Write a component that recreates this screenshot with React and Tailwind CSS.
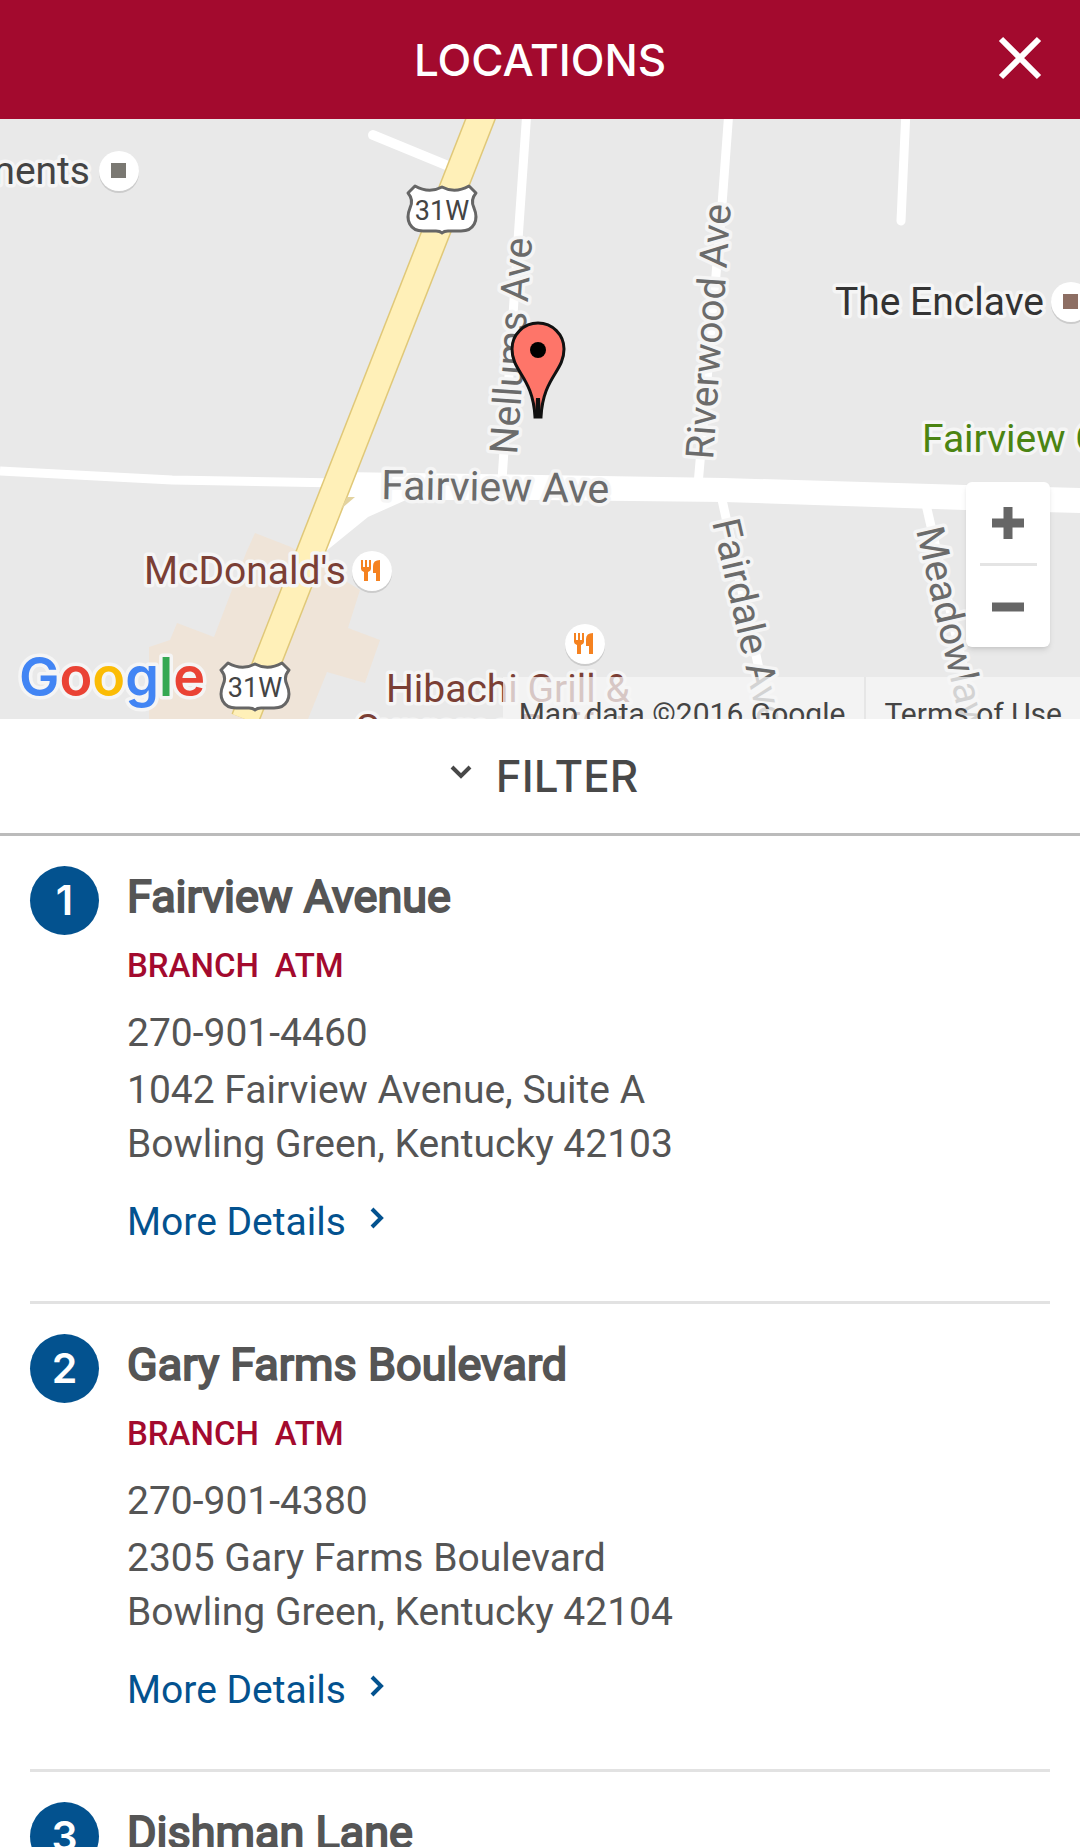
import React from "react";

const locations = [
  {
    name: "Fairview Avenue",
    tags: ["BRANCH", "ATM"],
    phone: "270-901-4460",
    street: "1042 Fairview Avenue, Suite A",
    city: "Bowling Green, Kentucky 42103",
  },
  {
    name: "Gary Farms Boulevard",
    tags: ["BRANCH", "ATM"],
    phone: "270-901-4380",
    street: "2305 Gary Farms Boulevard",
    city: "Bowling Green, Kentucky 42104",
  },
  { name: "Dishman Lane" },
];

function Shield({ x, y }) {
  return (
    <g transform={`translate(${x} ${y})`}>
      <path
        d="M-27 -24 Q-13 -16 0 -23 Q13 -16 27 -24 L34 -17 Q28 -10 32 -2 C37 10 32 21 19 21 L6 21 Q2 21 0 23 Q-2 21 -6 21 L-19 21 C-32 21 -37 10 -32 -2 Q-28 -10 -34 -17 Z"
        fill="#fff"
        stroke="#666"
        strokeWidth="3"
        strokeLinejoin="round"
      />
      <text y="10" textAnchor="middle" fontSize="27" fill="#444">
        31W
      </text>
    </g>
  );
}

function Poi({ x, y, color }) {
  return (
    <g transform={`translate(${x} ${y})`}>
      <circle cy="2" r="20" fill="#ccc" />
      <circle r="20" fill="#fff" />
      {color ? (
        <rect x="-8" y="-8" width="15" height="15" fill={color} />
      ) : (
        <g fill="#f58220">
          <path d="M-11 -11 h2 v7 h2 v-7 h2 v7 h2 v-7 h2 v9 q0 2 -3 3 v9 h-4 v-9 q-3 -1 -3 -3 z" />
          <path d="M8 -11 V10 H4 V2 H1 V-5 Q1 -11 8 -11 Z" />
        </g>
      )}
    </g>
  );
}

const halo = {
  stroke: "#f5f5f5",
  strokeWidth: 7,
  strokeLinejoin: "round",
  paintOrder: "stroke",
};

function MapDrawing() {
  return (
    <svg
      viewBox="0 119 1080 600"
      preserveAspectRatio="xMidYMid slice"
      className="block h-full w-full"
      role="img"
      aria-label="Map around Fairview Avenue"
    >
      <path
        d="M255 533 L291 547 L360 590 L348 628 L380 640 L365 683 L327 672 L308 719 H149 V647 L170 640 L177 623 L214 637 L246 553 Z"
        fill="#efe4d8"
      />
      <g fill="none" stroke="#fff" strokeWidth="9">
        <path d="M373 135 L446 165" strokeWidth="10" strokeLinecap="round" />
        <path d="M527 110 L518 240 L502 480" />
        <path d="M729 110 L722 205 L698 485" />
        <path d="M906 110 L901 221" strokeLinecap="round" />
        <path d="M721 495 L770 719" />
        <path d="M925 500 L975 719" />
        <path d="M0 471 L172 480 L340 483" />
      </g>
      <path
        d="M340 472 L540 475 L724 478 L965 485 L1080 488 V513 L965 510 L724 502 L540 500 L406 500 L368 517 L320 556 Z"
        fill="#fff"
      />
      <path d="M484 110 L245 719" stroke="#e0c878" strokeWidth="29" />
      <path d="M484 110 L245 719" stroke="#fff0b8" strokeWidth="26" />
      <path d="M347 497 H355 L341 509 Z" fill="#e3d3a0" />

      <Shield x={442} y={210} />
      <Shield x={255} y={687} />

      <g fontSize="39" {...halo}>
        <text x="90" y="184" textAnchor="end" fill="#444">Apartments</text>
        <text x="835" y="315" fill="#333">The Enclave</text>
        <text x="922" y="452" fill="#4b8412">Fairview Gardens</text>
        <text x="144" y="584" fill="#7b3f35">McDonald's</text>
        <text x="386" y="702" fill="#7b3f35">Hibachi Grill &amp;</text>
        <text x="356" y="742" fill="#7b3f35">Supreme Buffet</text>
        <g fill="#6b6b6b">
          <text transform="translate(381 499) rotate(1)" fontSize="41">Fairview Ave</text>
          <text transform="translate(517 455) rotate(-86)">Nellums Ave</text>
          <text transform="translate(713 460) rotate(-86)">Riverwood Ave</text>
          <text transform="translate(712 522) rotate(77)">Fairdale Ave</text>
          <text transform="translate(916 530) rotate(77)">Meadowlawn</text>
        </g>
      </g>

      <Poi x={119} y={171} color="#7a7872" />
      <Poi x={1071} y={302} color="#8d6e63" />
      <Poi x={372} y={571} />
      <Poi x={585} y={644} />

      <g transform="translate(538 322)">
        <path
          d="M-3 95 C-5 55 -26 50 -26 27 A26 26 0 0 1 26 27 C26 50 5 55 3 95 Z"
          fill="#fe7569"
          stroke="#111"
          strokeWidth="3"
        />
        <path d="M-3 95 L-2 76 H2 L3 95 Z" fill="#111" />
        <circle cy="28" r="8" fill="#000" />
      </g>

      <text
        x="19"
        y="696"
        fontSize="54"
        fontWeight="600"
        className="font-['Inter',sans-serif]"
        {...halo}
      >
        <tspan fill="#4285f4">G</tspan>
        <tspan fill="#ea4335">o</tspan>
        <tspan fill="#fbbc05">o</tspan>
        <tspan fill="#4285f4">g</tspan>
        <tspan fill="#34a853">l</tspan>
        <tspan fill="#ea4335">e</tspan>
      </text>
    </svg>
  );
}

function LocationItem({ number, place }) {
  return (
    <li className="flex items-start gap-7 border-b-[3px] border-[#e2e2e2] pt-[30px]">
      <span className="flex size-[69px] shrink-0 items-center justify-center rounded-full bg-[#03528f] font-['Inter',sans-serif] text-[41px] leading-none font-semibold text-white">
        {number}
      </span>
      <div className="min-w-0 flex-1 pb-[52px] text-[39px] leading-[54px]">
        <h2 className="text-[45px] leading-[62px] [-webkit-text-stroke:2px]">{place.name}</h2>
        {place.tags && (
          <>
            <p className="mt-[18px] flex gap-4 text-[33px] leading-[40px] font-medium text-[#a30a2e]">
              {place.tags.map((tag) => (
                <span key={tag}>{tag}</span>
              ))}
            </p>
            <p className="mt-5">{place.phone}</p>
            <address className="mt-[3px] not-italic">
              {place.street}
              <br />
              {place.city}
            </address>
            <a href="#details" className="mt-6 inline-flex items-center gap-6 text-[#03528f]">
              More Details
              <svg width="14" height="22" viewBox="0 0 14 22" className="mb-2" aria-hidden="true">
                <path d="M2 2 L11 11 L2 20" fill="none" stroke="currentColor" strokeWidth="4" />
              </svg>
            </a>
          </>
        )}
      </div>
    </li>
  );
}

export default function App() {
  return (
    <div className="flex h-screen flex-col overflow-hidden bg-white font-['Roboto',sans-serif] text-[#555]">
      <header className="grid h-[119px] shrink-0 grid-cols-[1fr_auto_1fr] items-center bg-[#a30a2e] px-[38px] text-white">
        <h1 className="col-start-2 font-['Inter',sans-serif] text-[44px] leading-none font-medium">LOCATIONS</h1>
        <button type="button" aria-label="Close" className="mb-1 justify-self-end">
          <svg width="44" height="44" viewBox="0 0 44 44" aria-hidden="true">
            <path d="M3 3 L41 41 M41 3 L3 41" stroke="currentColor" strokeWidth="6" />
          </svg>
        </button>
      </header>

      <section className="relative h-[600px] shrink-0 overflow-hidden bg-[#e9e9e9]">
        <MapDrawing />
        <div className="absolute right-0 -bottom-[30px] flex h-[72px] items-center bg-[#f5f5f5]/75 text-[30px] text-[#444]">
          <span className="pr-[19px] pl-4">Map data ©2016 Google</span>
          <a href="#terms" className="flex h-full items-center border-l-2 border-[#e6e6e6] pr-[18px] pl-[18px]">
            Terms of Use
          </a>
        </div>
        <div className="absolute right-[30px] bottom-[72px] flex h-[165px] w-[84px] flex-col items-center rounded-md bg-white text-[#666] shadow-md">
          <button type="button" aria-label="Zoom in" className="flex w-full flex-1 items-center justify-center">
            <svg width="32" height="32" viewBox="0 0 32 32" aria-hidden="true">
              <path d="M0 16 H32 M16 0 V32" stroke="currentColor" strokeWidth="9" />
            </svg>
          </button>
          <span className="h-[3px] w-[57px] bg-[#e4e4e4]" />
          <button type="button" aria-label="Zoom out" className="flex w-full flex-1 items-center justify-center">
            <svg width="32" height="32" viewBox="0 0 32 32" aria-hidden="true">
              <path d="M0 16 H32" stroke="currentColor" strokeWidth="9" />
            </svg>
          </button>
        </div>
      </section>

      <button
        type="button"
        className="flex h-[117px] w-full shrink-0 items-center justify-center gap-6 border-b-[3px] border-[#bbb] pl-2 font-['Inter',sans-serif] text-[44px] leading-none font-medium text-[#484848]"
      >
        <svg width="22" height="16" viewBox="0 0 22 16" className="mb-2" aria-hidden="true">
          <path d="M2 3 L11 12 L20 3" fill="none" stroke="currentColor" strokeWidth="4" />
        </svg>
        FILTER
      </button>

      <ul className="min-h-0 flex-1 overflow-y-auto px-[30px] [scrollbar-width:none]">
        {locations.map((place, index) => (
          <LocationItem key={place.name} number={index + 1} place={place} />
        ))}
      </ul>
    </div>
  );
}
